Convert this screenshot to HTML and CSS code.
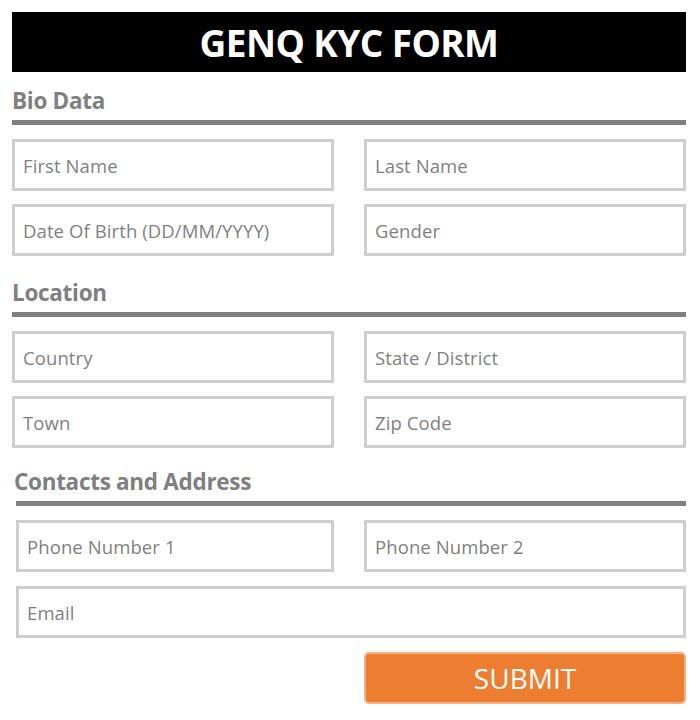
FILE: index.html
```html
<!DOCTYPE html>
<html>
<head>
<meta charset="utf-8">
<title>GENQ KYC FORM</title>
<link rel="stylesheet" href="styles.css">
</head>
<body>
<div class="page">
  <header class="banner"><h1>GENQ KYC FORM</h1></header>

  <section class="section">
    <h2 class="section-title">Bio Data</h2>
    <div class="rule"></div>
    <div class="grid">
      <div class="field">First Name</div>
      <div class="field">Last Name</div>
      <div class="field">Date Of Birth (DD/MM/YYYY)</div>
      <div class="field">Gender</div>
    </div>
  </section>

  <section class="section">
    <h2 class="section-title">Location</h2>
    <div class="rule"></div>
    <div class="grid">
      <div class="field">Country</div>
      <div class="field">State / District</div>
      <div class="field">Town</div>
      <div class="field">Zip Code</div>
    </div>
  </section>

  <section class="section section-contacts">
    <h2 class="section-title">Contacts and Address</h2>
    <div class="rule"></div>
    <div class="grid">
      <div class="field">Phone Number 1</div>
      <div class="field">Phone Number 2</div>
      <div class="field wide">Email</div>
    </div>
  </section>

  <div class="actions">
    <button class="submit">SUBMIT</button>
  </div>
</div>
</body>
</html>
```

FILE: styles.css
```css
html, body {
  margin: 0;
  padding: 0;
  background: #ffffff;
}

body {
  font-family: "Open Sans", "Noto Sans", sans-serif;
}

.page {
  width: 674px;
  padding: 12px 0 0 12px;
}

.banner {
  background: #000000;
  height: 60px;
  display: flex;
  align-items: center;
  justify-content: center;
}

.banner h1 {
  margin: 0;
  color: #ffffff;
  font-size: 37px;
  font-weight: 700;
  letter-spacing: -0.6px;
  line-height: 1;
}

.section-title {
  margin: 0;
  color: #7f7f7f;
  font-size: 22.5px;
  font-weight: 700;
  letter-spacing: -0.3px;
  line-height: 30px;
  padding-top: 1px;
}

.section {
  margin-top: 13px;
}

.section + .section {
  margin-top: 21px;
}

.section.section-contacts {
  margin-top: 18px;
  padding-left: 4px;
}

.section-contacts .section-title {
  margin-left: -2px;
}

.rule {
  height: 5px;
  background: #808080;
  margin-top: 4px;
}

.grid {
  display: grid;
  grid-template-columns: 322px 322px;
  column-gap: 30px;
  row-gap: 13px;
  margin-top: 14px;
}

.section-contacts .grid {
  grid-template-columns: 318px 322px;
  row-gap: 14px;
}

.field {
  box-sizing: border-box;
  height: 52px;
  border: 3px solid #cecece;
  padding-left: 8px;
  display: flex;
  align-items: center;
  color: #7f7f7f;
  font-size: 18.5px;
  letter-spacing: 0.1px;
}

.field.wide {
  grid-column: 1 / 3;
}

.actions {
  display: flex;
  justify-content: flex-end;
  margin-top: 14px;
}

.submit {
  box-sizing: border-box;
  width: 322px;
  height: 52px;
  background: #ed7d31;
  border: 2px solid #f4b183;
  border-radius: 5px;
  color: #ffffff;
  font-family: "Open Sans", "Noto Sans", sans-serif;
  font-size: 28px;
  font-weight: 400;
  padding: 0;
}
```
